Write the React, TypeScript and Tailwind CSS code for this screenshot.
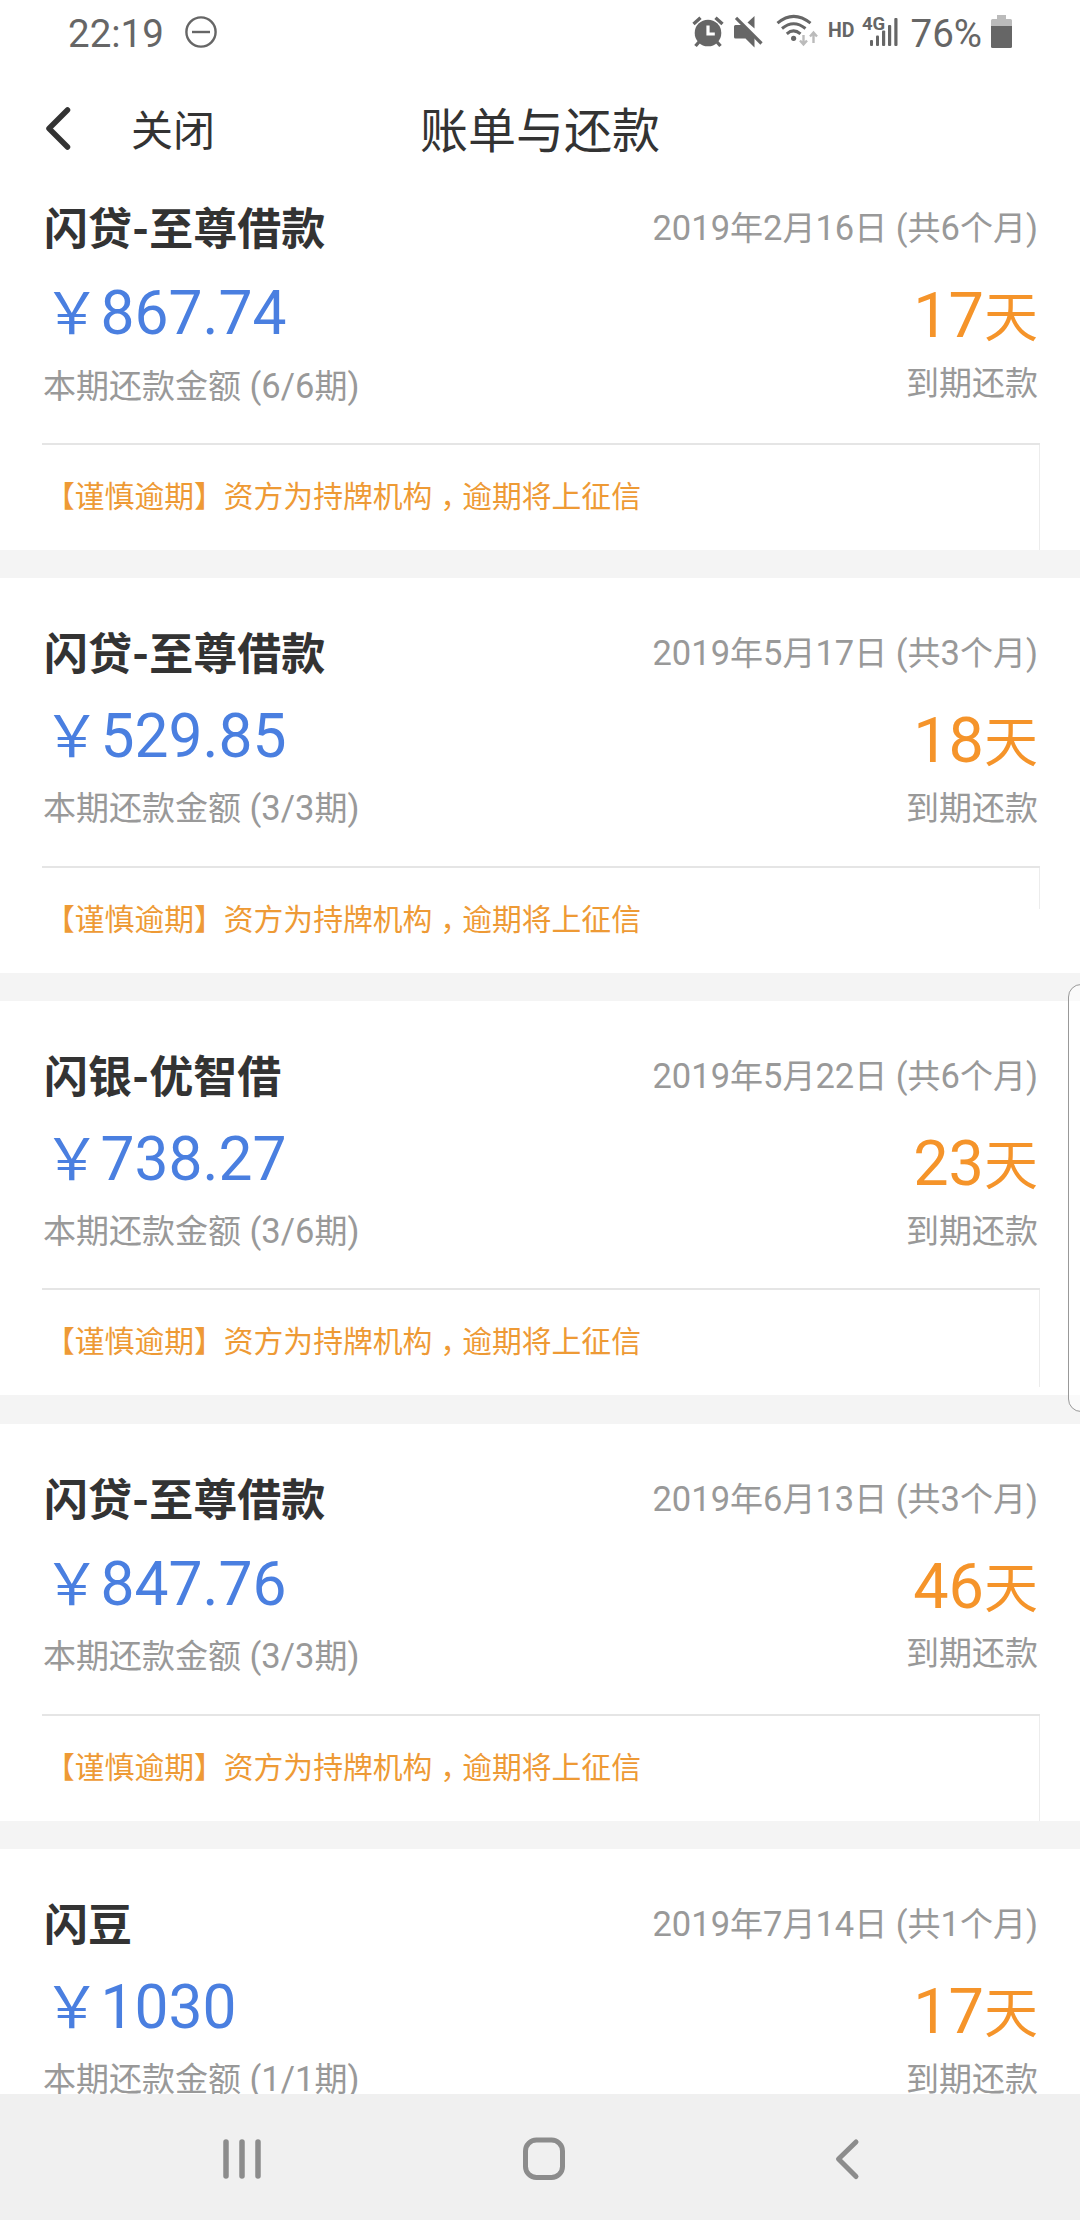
interface Bill {
  name: string;
  date: string;
  months: number;
  amount: string;
  period: string;
  days: number;
  // the amount column of some cards sits slightly lower
  amountGap: string;
  height: string;
  edge: string;
}

const bills: Bill[] = [
  {
    name: "闪贷-至尊借款",
    date: "2019年2月16日",
    months: 6,
    amount: "867.74",
    period: "6/6",
    days: 17,
    amountGap: "pt-[22px]",
    height: "h-[396.75px]",
    edge: "h-[105px]",
  },
  {
    name: "闪贷-至尊借款",
    date: "2019年5月17日",
    months: 3,
    amount: "529.85",
    period: "3/3",
    days: 18,
    amountGap: "pt-[19.5px]",
    height: "h-[394.25px]",
    edge: "h-[41px]",
  },
  {
    name: "闪银-优智借",
    date: "2019年5月22日",
    months: 6,
    amount: "738.27",
    period: "3/6",
    days: 23,
    amountGap: "pt-[19.5px]",
    height: "h-[394.25px]",
    edge: "h-[97px]",
  },
  {
    name: "闪贷-至尊借款",
    date: "2019年6月13日",
    months: 3,
    amount: "847.76",
    period: "3/3",
    days: 46,
    amountGap: "pt-[22px]",
    height: "h-[396.75px]",
    edge: "h-[105px]",
  },
  {
    name: "闪豆",
    date: "2019年7月14日",
    months: 1,
    amount: "1030",
    period: "1/1",
    days: 17,
    amountGap: "pt-[19.5px]",
    height: "h-[394.25px]",
    edge: "h-[105px]",
  },
];

// Digits run a touch larger than the Chinese characters around them.
function MixedText({ children }: { children: string }) {
  return children.split(/([\u4e00-\u9fff]+)/).map((part, i) =>
    i % 2 === 1 ? (
      <span key={i} className="text-[33px] leading-none">
        {part}
      </span>
    ) : (
      part
    ),
  );
}

function AlarmIcon() {
  return (
    <svg className="mt-4 h-8 w-8" viewBox="0 0 32 32" fill="none">
      <circle cx="16" cy="17" r="13.3" fill="#666" />
      <path d="M1.5 8 8.5 1.8M30.5 8 23.5 1.8" stroke="#666" strokeWidth="3.4" />
      <path d="M7 26 3.5 30M25 26l3.5 4" stroke="#666" strokeWidth="3.4" />
      <path d="M16 9.5V18h6.8" stroke="#fff" strokeWidth="3.2" />
    </svg>
  );
}

function MuteIcon() {
  return (
    <svg className="mt-4 ml-2.5 h-8 w-[30px]" viewBox="0 0 30 32" fill="none">
      <path d="M0 10.5Q0 9 1.5 9H7.5L20.5 21.5V31.5L11.5 22.5H1.5Q0 22.5 0 21Z" fill="#666" />
      <path d="M20.5 0V12.5L13.5 6.5Z" fill="#666" />
      <path d="M2 1.8 27.5 27.5" stroke="#666" strokeWidth="3.2" />
    </svg>
  );
}

function WifiIcon() {
  return (
    <svg className="mt-3.5 ml-3 h-[34px] w-[42px]" viewBox="0 0 42 34" fill="none">
      <path d="M1.5 9.2Q17.5-4.5 34.5 9.2" stroke="#666" strokeWidth="3" />
      <path d="M6 14.5Q17.5 5 29.5 14.5" stroke="#666" strokeWidth="3" />
      <path d="M10.8 19.8Q17.5 14 24.5 19.8" stroke="#666" strokeWidth="3" />
      <circle cx="17.6" cy="24.3" r="2.6" fill="#666" />
      <path
        d="M27.5 21v9M24 26.5l3.5 4 3.5-4M37.5 29v-9M34 22.5l3.5-4 3.5 4"
        stroke="#bbb"
        strokeWidth="2.4"
      />
    </svg>
  );
}

function SignalIcon() {
  return (
    <svg className="mt-2 ml-[7px] h-10 w-[37px]" viewBox="0 0 37 40">
      <text x="0" y="21.7" className="text-[18.5px] font-bold" fill="#666">
        4G
      </text>
      <rect x="8" y="32" width="3" height="6" rx="1" fill="#666" />
      <rect x="14" y="27.5" width="3" height="10.5" rx="1" fill="#666" />
      <rect x="20" y="22.5" width="3.2" height="15.5" rx="1" fill="#666" />
      <rect x="26" y="17" width="3.2" height="21" rx="1" fill="#666" />
      <rect x="32.3" y="10" width="3.2" height="28" rx="1" fill="#666" />
    </svg>
  );
}

function BatteryIcon() {
  return (
    <svg className="mt-[15px] ml-[9px] h-[33px] w-[21px]" viewBox="0 0 21 33">
      <path d="M6 0h9v4h4.5Q21 4 21 5.5V12H0V5.5Q0 4 1.5 4H6Z" fill="#bbb" />
      <path d="M0 11H21V31.5Q21 33 19.5 33H1.5Q0 33 0 31.5Z" fill="#666" />
    </svg>
  );
}

function StatusBar() {
  return (
    <div className="flex h-16 items-start justify-between pr-[68px] pl-[68px] text-[38.5px] leading-[68px] text-[#666]">
      <div className="flex">
        <span>22:19</span>
        <svg className="mt-4 ml-[21px] h-8 w-8" viewBox="0 0 32 32" fill="none" stroke="#666" strokeWidth="2.4">
          <circle cx="16" cy="16" r="14.6" />
          <path d="M7 16h18" />
        </svg>
      </div>
      <div className="flex">
        <AlarmIcon />
        <MuteIcon />
        <WifiIcon />
        <span className="ml-2.5 text-[19.5px] leading-[61px] font-bold">HD</span>
        <SignalIcon />
        <span className="ml-3">76%</span>
        <BatteryIcon />
      </div>
    </div>
  );
}

function Header() {
  return (
    <header className="grid h-[89px] grid-cols-3 items-start text-[#333]">
      <div className="flex pl-[45px]">
        <svg className="mt-[43px] h-[43px] w-[26px]" viewBox="0 0 26 43" fill="none">
          <path
            d="M22.5 3 4 21.5 22.5 40"
            stroke="#333"
            strokeWidth="5.5"
            strokeLinecap="round"
            strokeLinejoin="round"
          />
        </svg>
        <span className="ml-[60px] pt-[38px] text-[42px] leading-[60px]">关闭</span>
      </div>
      <h1 className="pt-[38px] text-center text-[48px] leading-[60px]">账单与还款</h1>
    </header>
  );
}

function BillCard({ bill }: { bill: Bill }) {
  return (
    <section className={`flex shrink-0 flex-col justify-between bg-white pr-10 pl-[42px] ${bill.height}`}>
      <div className="flex justify-between pt-[51px] pr-0.5">
        <div className="pl-px">
          <h2 className="pl-px text-[44px] leading-[52px] font-bold text-[#333]">{bill.name}</h2>
          <p className={`text-[60.5px] leading-[72px] text-[#4a7fe0] ${bill.amountGap}`}>
            <span className="text-[57.5px] leading-none">{"\uffe5"}</span>
            {bill.amount}
          </p>
          <p className="pt-[15.5px] text-[34.5px] leading-[40px] text-[#999]">
            <MixedText>{`本期还款金额 (${bill.period}期)`}</MixedText>
          </p>
        </div>
        <div className="text-right text-[34.5px] text-[#999]">
          <p className="pt-1 leading-[40px]">
            <MixedText>{`${bill.date} (共${bill.months}个月)`}</MixedText>
          </p>
          <p className="pt-8 text-[63px] leading-[72px] text-[#f5942a]">
            {bill.days}
            <span className="text-[54px] leading-none">天</span>
          </p>
          <p className="pt-[11.5px] text-[33px] leading-[40px]">到期还款</p>
        </div>
      </div>
      <div className="flex h-[107px] justify-between border-t-2 border-[#e5e5e5]">
        <p className="pt-[32px] pl-[3px] text-[29.8px] leading-[40px] text-[#ee9a35]">
          【谨慎逾期】资方为持牌机构
          <span className="-mr-2 pl-2">{"\uff0c"}</span>
          逾期将上征信
        </p>
        <div className={`w-px bg-[#ececec] ${bill.edge}`} />
      </div>
    </section>
  );
}

function NavBar() {
  return (
    <nav className="flex h-[126px] shrink-0 items-start bg-[#f0f0f0] pt-[43px] pl-[222px]">
      <svg className="h-11 w-10" viewBox="0 0 40 44" stroke="#8c8c8c" strokeWidth="5.5" strokeLinecap="round">
        <path d="M4 5v34M20 5v34M36 5v34" />
      </svg>
      <svg className="ml-[261px] h-11 w-[42px]" viewBox="0 0 42 44" fill="none">
        <rect x="2.5" y="3" width="37" height="37.5" rx="11" stroke="#8c8c8c" strokeWidth="5" />
      </svg>
      <svg className="ml-[269px] h-11 w-[26px]" viewBox="0 0 26 44" fill="none">
        <path
          d="M22 5 4.5 22 22 39.5"
          stroke="#8c8c8c"
          strokeWidth="5"
          strokeLinecap="round"
          strokeLinejoin="round"
        />
      </svg>
    </nav>
  );
}

export default function App() {
  return (
    <div className="relative flex h-[2220px] w-[1080px] flex-col overflow-hidden bg-white font-[Roboto,'Noto_Sans_CJK_SC',sans-serif]">
      <StatusBar />
      <Header />
      <main className="flex min-h-0 flex-1 flex-col gap-[28.5px] overflow-hidden bg-[#f4f4f4]">
        {bills.map((bill) => (
          <BillCard key={bill.date} bill={bill} />
        ))}
      </main>
      <NavBar />
      {/* edge panel handle */}
      <div className="absolute top-[984px] -right-1 h-[428px] w-4 rounded-l-[13px] border-[1.5px] border-[#999] bg-white/50" />
    </div>
  );
}
